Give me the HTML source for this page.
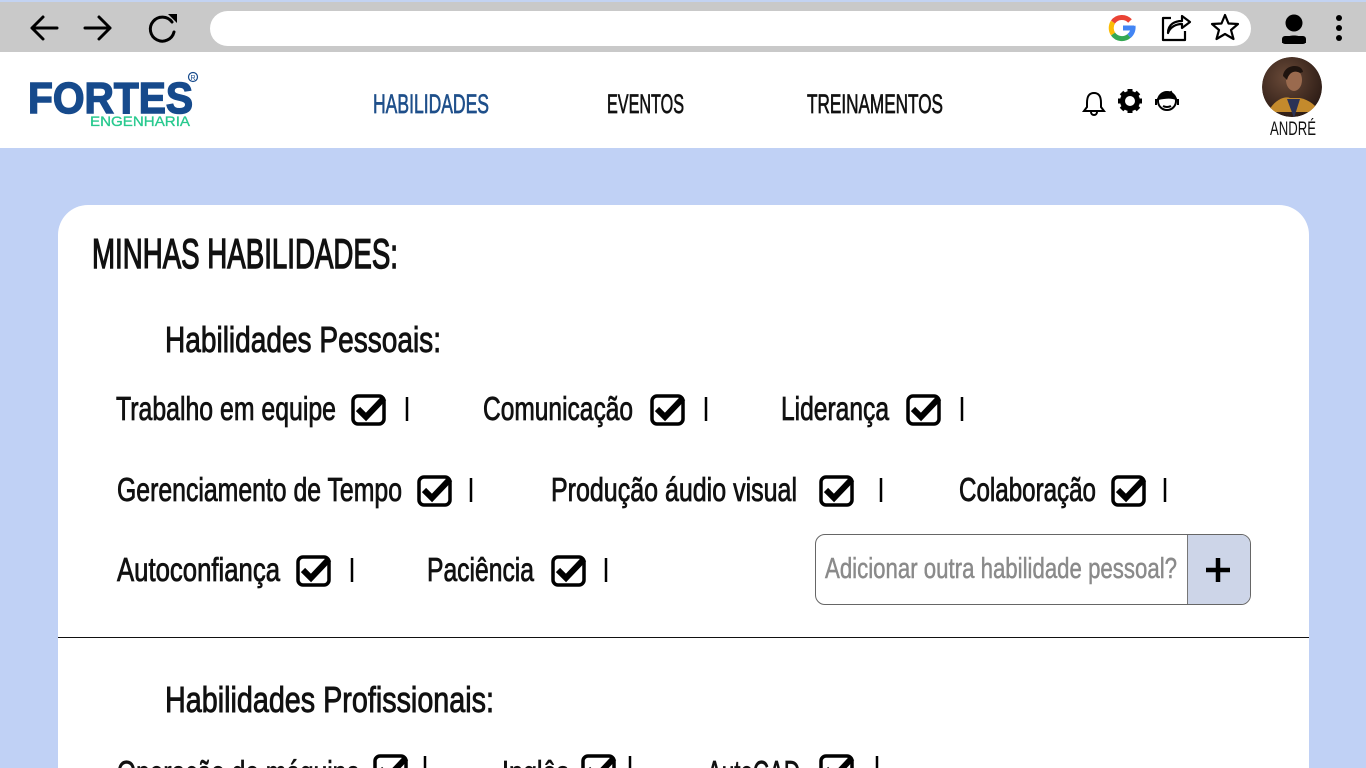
<!DOCTYPE html>
<html style="overflow:hidden;height:768px"><head><meta charset="utf-8"><style>
*{margin:0;padding:0;box-sizing:border-box}
body{width:1366px;height:768px;overflow:hidden;background:#c0d1f5;position:relative;font-family:"Liberation Sans",sans-serif}
.abs{position:absolute}
</style></head><body>
<div class="abs" style="left:0;top:0;width:1366px;height:52px;background:#c9c9c9;border-top:2px solid #c3d3f2"></div>
<div class="abs" style="left:210px;top:11px;width:1041px;height:35px;background:#fff;border-radius:18px"></div>
<div class="abs" style="left:0;top:52px;width:1366px;height:96px;background:#fff"></div>
<div class="abs" style="left:58px;top:205px;width:1251px;height:563px;background:#fff;border-radius:30px 30px 0 0"></div>
<div class="abs" style="left:58px;top:637px;width:1251px;height:1px;background:#111"></div>
<div class="abs" style="left:815px;top:534px;width:436px;height:71px;border:1px solid #666;border-radius:10px;background:#fff;overflow:hidden">
<div class="abs" style="left:371px;top:0;width:64px;height:71px;background:#cdd5e8;border-left:1px solid #777"></div>
</div>

<svg class="abs" style="left:0;top:0" width="1366" height="768" viewBox="0 0 1366 768">
<defs>
<g id="cb">
<rect x="2" y="4" width="31" height="28" rx="5" fill="none" stroke="#000" stroke-width="3.5"/>
<path d="M7 17 L15 25 L33 6" fill="none" stroke="#000" stroke-width="6" stroke-linejoin="miter"/>
</g>
</defs>
<g fill="none" stroke="#000" stroke-width="3" stroke-linecap="round" stroke-linejoin="round">
<path d="M57 28 H32 M43 17 L32 28 L43 39"/>
<path d="M85 28 H110 M99 17 L110 28 L99 39"/>
<path d="M172 22 A12 12 0 1 0 174 32"/>
</g>
<path d="M168 14 L177 14 L177 23 Z" fill="#000"/>
<g transform="translate(1122,28)" fill="none" stroke-width="5">
<path d="M11 -2 A11 11 0 0 1 7 8" stroke="#4285f4"/>
<path d="M7 8 A11 11 0 0 1 -9 6" stroke="#34a853"/>
<path d="M-9 6 A11 11 0 0 1 -9 -6" stroke="#fbbc05"/>
<path d="M-9 -6 A11 11 0 0 1 8 -7" stroke="#ea4335"/>
<path d="M1 0 H12" stroke="#4285f4"/>
</g>
<g fill="none" stroke="#000" stroke-width="2.2" stroke-linejoin="round">
<path d="M1171 18 H1163 V40 H1185 V31"/>
<path d="M1168 33 C1168 24 1175 21 1182 21 V16 L1190 22 L1182 28 V24 C1176 24 1170 27 1168 33 Z"/>
<path d="M1225 15 L1228.5 23.5 L1238 24 L1231 30 L1233.5 39 L1225 34 L1216.5 39 L1219 30 L1212 24 L1221.5 23.5 Z"/>
</g>
<circle cx="1294" cy="23" r="8.5" fill="#000"/>
<path d="M1282 43 C1282 33 1306 33 1306 43 Z" fill="#000"/>
<rect x="1282" y="36" width="24" height="8" rx="3" fill="#000"/>
<circle cx="1339" cy="18" r="3" fill="#000"/><circle cx="1339" cy="28" r="3" fill="#000"/><circle cx="1339" cy="38" r="3" fill="#000"/>

<text x="28" y="113" font-family="Liberation Sans" font-weight="bold" font-size="44" fill="#164a8c" textLength="165" lengthAdjust="spacingAndGlyphs" stroke="#164a8c" stroke-width="1.5">FORTES</text>
<text x="90" y="126" font-family="Liberation Sans" font-size="14" fill="#27c98e" textLength="100" lengthAdjust="spacingAndGlyphs" stroke="#27c98e" stroke-width="0.3">ENGENHARIA</text>
<circle cx="193" cy="77" r="4.5" fill="none" stroke="#164a8c" stroke-width="1.2"/>
<text x="190.5" y="80" font-size="7" fill="#164a8c" font-family="Liberation Sans">R</text>

<g font-family="Liberation Sans" font-size="27" stroke-width="0.7">
<text x="373" y="113" fill="#1e4f8a" stroke="#1e4f8a" textLength="116" lengthAdjust="spacingAndGlyphs">HABILIDADES</text>
<text x="607" y="113" fill="#111" stroke="#111" textLength="77" lengthAdjust="spacingAndGlyphs">EVENTOS</text>
<text x="807" y="113" fill="#111" stroke="#111" textLength="136" lengthAdjust="spacingAndGlyphs">TREINAMENTOS</text>
</g>
<path d="M1094 93 C1088 93 1087 98 1087 103 V107 L1084 111 H1104 L1101 107 V103 C1101 98 1100 93 1094 93 Z M1091 112 A3 3 0 0 0 1097 112" fill="none" stroke="#000" stroke-width="2"/>
<g transform="translate(1130,101)">
<circle r="7.5" fill="none" stroke="#000" stroke-width="5"/>
<g fill="#000"><rect x="-2.5" y="-12" width="5" height="5"/><rect x="-2.5" y="7" width="5" height="5"/><rect x="-12" y="-2.5" width="5" height="5"/><rect x="7" y="-2.5" width="5" height="5"/>
<rect x="-2.5" y="-12" width="5" height="5" transform="rotate(45)"/><rect x="-2.5" y="7" width="5" height="5" transform="rotate(45)"/><rect x="-12" y="-2.5" width="5" height="5" transform="rotate(45)"/><rect x="7" y="-2.5" width="5" height="5" transform="rotate(45)"/></g>
</g>
<g transform="translate(1167,101)" fill="none" stroke="#000" stroke-width="2">
<circle r="9"/>
<path d="M-9 -2 C-6 -7 0 -7 4 -9 C5 -6 8 -5 9 -2 C5 -4 0 -4 -9 -2 Z" fill="#000"/>
<path d="M-11 -2 V4 M11 -2 V4"/>
<path d="M-4 5 Q0 7 4 5"/>
</g>
<defs><radialGradient id="av" cx="0.4" cy="0.35" r="0.7"><stop offset="0" stop-color="#6a4a38"/><stop offset="1" stop-color="#2a1a14"/></radialGradient><clipPath id="avc"><circle cx="1292" cy="87" r="30"/></clipPath></defs>
<g clip-path="url(#avc)">
<circle cx="1292" cy="87" r="30" fill="url(#av)"/>
<path d="M1268 112 C1275 99 1285 96 1290 98 L1300 98 C1310 100 1316 106 1320 112 Z" fill="#c48a2c"/>
<path d="M1287 99 L1294 118 L1300 99 Z" fill="#2b3256"/>
<ellipse cx="1294" cy="80" rx="8" ry="11" fill="#9a6a4e"/>
<path d="M1283 76 C1284 64 1302 63 1303 72 L1300 73 C1295 70 1289 72 1287 80 Z" fill="#1f140f"/>
</g>
<text x="1270" y="135" font-family="Liberation Sans" font-size="19" fill="#111" textLength="46" lengthAdjust="spacingAndGlyphs">ANDRÉ</text>

<g font-family="Liberation Sans" fill="#111" stroke="#111">
<text x="92" y="268" font-size="42" textLength="306" lengthAdjust="spacingAndGlyphs" stroke-width="1.4">MINHAS HABILIDADES:</text>
<text x="165" y="352" font-size="36" textLength="276" lengthAdjust="spacingAndGlyphs" stroke-width="0.9">Habilidades Pessoais:</text>
<text x="165" y="712" font-size="36" textLength="329" lengthAdjust="spacingAndGlyphs" stroke-width="0.9">Habilidades Profissionais:</text>
</g>
<g font-family="Liberation Sans" font-size="33" fill="#111" stroke="#111" stroke-width="0.8">
<text x="116" y="420" textLength="220" lengthAdjust="spacingAndGlyphs">Trabalho em equipe</text>
<text x="483" y="420" textLength="150" lengthAdjust="spacingAndGlyphs">Comunicação</text>
<text x="781" y="420" textLength="108" lengthAdjust="spacingAndGlyphs">Liderança</text>
<text x="117" y="501" textLength="285" lengthAdjust="spacingAndGlyphs">Gerenciamento de Tempo</text>
<text x="551" y="501" textLength="246" lengthAdjust="spacingAndGlyphs">Produção áudio visual</text>
<text x="959" y="501" textLength="137" lengthAdjust="spacingAndGlyphs">Colaboração</text>
<text x="117" y="581" textLength="163" lengthAdjust="spacingAndGlyphs">Autoconfiança</text>
<text x="427" y="581" textLength="107" lengthAdjust="spacingAndGlyphs">Paciência</text>
<text x="117" y="784" textLength="243" lengthAdjust="spacingAndGlyphs">Operação de máquina</text>
<text x="502" y="784" textLength="67" lengthAdjust="spacingAndGlyphs">Inglês</text>
<text x="707" y="784" textLength="93" lengthAdjust="spacingAndGlyphs">AutoCAD</text>
</g>
<text x="825" y="578" font-family="Liberation Sans" font-size="29" fill="#8a8a8a" stroke="#8a8a8a" stroke-width="0.5" textLength="352" lengthAdjust="spacingAndGlyphs">Adicionar outra habilidade pessoal?</text>
<path d="M1218 558 V582 M1206 570 H1230" stroke="#000" stroke-width="4.5"/>
<use href="#cb" x="351" y="392"/><use href="#cb" x="650" y="392"/><use href="#cb" x="906" y="392"/>
<use href="#cb" x="417" y="473"/><use href="#cb" x="819" y="473"/><use href="#cb" x="1111" y="473"/>
<use href="#cb" x="296" y="553"/><use href="#cb" x="551" y="553"/>
<use href="#cb" x="373" y="752"/><use href="#cb" x="581" y="752"/><use href="#cb" x="819" y="752"/>
<g stroke="#000" stroke-width="2.5">
<path d="M407 397 V421 M706 397 V421 M962 397 V421"/>
<path d="M471 478 V502 M881 478 V502 M1165 478 V502"/>
<path d="M352 558 V582 M606 558 V582"/>
<path d="M425 756 V780 M630 756 V780 M877 756 V780"/>
</g>
</svg>
</body></html>
